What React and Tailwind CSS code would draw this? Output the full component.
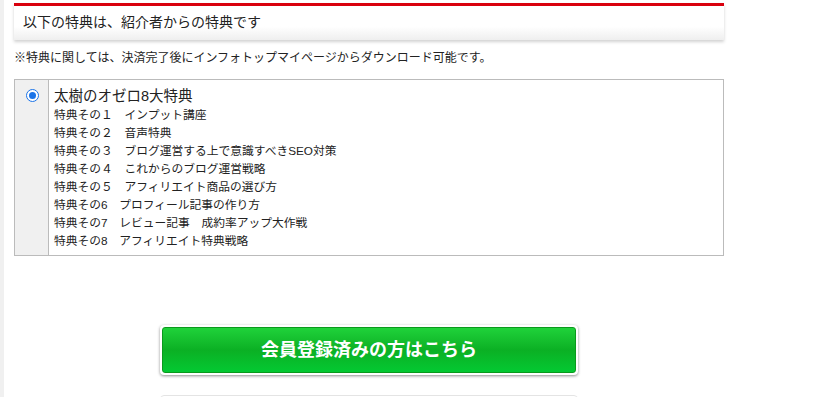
import React from 'react';

const items = [
  "特典その１　インプット講座",
  "特典その２　音声特典",
  "特典その３　ブログ運営する上で意識すべきSEO対策",
  "特典その４　これからのブログ運営戦略",
  "特典その５　アフィリエイト商品の選び方",
  "特典その6　プロフィール記事の作り方",
  "特典その7　レビュー記事　成約率アップ大作戦",
  "特典その8　アフィリエイト特典戦略",
];

export default function App() {
  return (
    <div className="flex h-[397px] w-[839px] overflow-hidden bg-white text-[#222] [font-family:'Liberation_Sans','Noto_Sans_CJK_JP',sans-serif]">
      {/* left strip */}
      <div className="w-[4px] shrink-0 bg-[#f0f0f0]" />

      <div className="w-[720px] shrink-0 pl-[10px] pt-[3px]">
        {/* header */}
        <div className="border-t-[3px] border-[#d9000d] bg-gradient-to-b from-white from-60% to-[#efefef] shadow-[0_2px_3px_rgba(0,0,0,0.18)]">
          <div className="h-[34px] pl-[9px] pt-[6px] text-[14px] leading-[20px]">以下の特典は、紹介者からの特典です</div>
        </div>

        <p className="mt-[10px] text-[12px] leading-[16px]">※特典に関しては、決済完了後にインフォトップマイページからダウンロード可能です。</p>

        {/* option box */}
        <div className="mt-[13px] flex h-[177px] w-[710px] border border-[#bbb]">
          <div className="flex w-[34px] shrink-0 justify-center border-r border-[#bbb] bg-[#f0f0f0] pt-[9px]">
            <span className="ml-[1px] flex h-[13px] w-[13px] items-center justify-center rounded-full border border-[#1a73e8] bg-white">
              <span className="h-[7px] w-[7px] rounded-full bg-[#1a73e8]" />
            </span>
          </div>
          <div className="pl-[5px] pt-[6px]">
            <div className="text-[14.5px] leading-[20px]">太樹のオゼロ8大特典</div>
            {items.map((t) => (
              <div key={t} className="text-[11.75px] leading-[18px]">{t}</div>
            ))}
          </div>
        </div>

        {/* button */}
        <div className="ml-[146px] mt-[69px] w-[418px] rounded-[4px] bg-white p-[2px] shadow-[0_1px_3px_rgba(0,0,0,0.45)]">
          <div className="flex h-[46px] items-center justify-center rounded-[3px] border border-[#0a9a1c] bg-gradient-to-b from-[#1fd23a] via-[#0bb024] to-[#03c932] text-[18px] font-bold text-white">
            会員登録済みの方はこちら
          </div>
        </div>
        <div className="ml-[146px] mt-[20px] h-[8px] w-[418px] rounded-t-[4px] border border-[#e4e4e4]" />
      </div>
    </div>
  );
}
